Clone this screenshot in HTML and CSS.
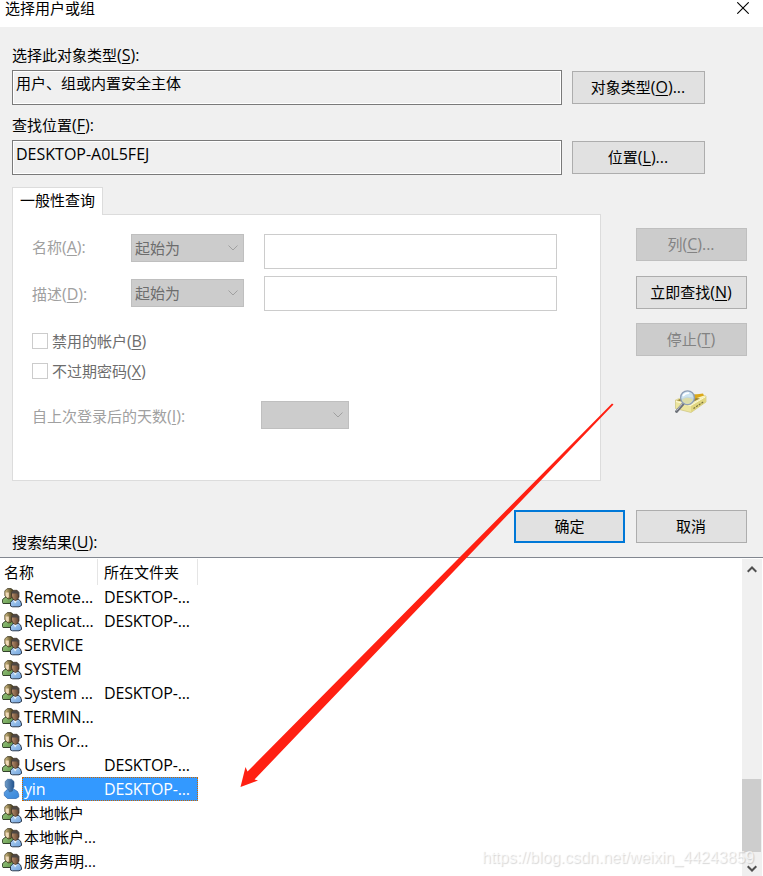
FILE: index.html
```html
<!DOCTYPE html>
<html lang="zh-CN">
<head>
<meta charset="utf-8">
<title>选择用户或组</title>
<link rel="stylesheet" href="styles.css">
</head>
<body>
<svg class="defs" width="0" height="0">
  <defs>
    <linearGradient id="green" x1="0" y1="0" x2="1" y2="1"><stop offset="0" stop-color="#a9cf8e"/><stop offset="1" stop-color="#5c9444"/></linearGradient>
    <linearGradient id="blue" x1="0" y1="0" x2="1" y2="1"><stop offset="0" stop-color="#b5d5f4"/><stop offset="1" stop-color="#6fa2dc"/></linearGradient>
    <linearGradient id="hair" x1="0" y1="0" x2="1" y2="0"><stop offset="0" stop-color="#d3c084"/><stop offset="1" stop-color="#3f3214"/></linearGradient>
    <linearGradient id="face" x1="0" y1="0" x2="1" y2="0"><stop offset="0" stop-color="#b98f6c"/><stop offset="1" stop-color="#5b3f2d"/></linearGradient>
    <linearGradient id="head" x1="0" y1="0" x2="1" y2="0"><stop offset="0" stop-color="#6f9cc8"/><stop offset="1" stop-color="#23548e"/></linearGradient>
    <linearGradient id="body" x1="0" y1="0" x2="1" y2="1"><stop offset="0" stop-color="#5b9ee0"/><stop offset="1" stop-color="#3787dc"/></linearGradient>
  </defs>
  <symbol id="group" viewBox="0 0 20 20">
    <path d="M.4 14.500V12L1.500 10.500 4 9V3.500L6 1H9.500L11.500 3V9L13 11V15.500H1Z" fill="url(#green)" stroke="#26331d" stroke-width=".9"/>
    <path d="M2.800 7.500V3L5 .7H9.300L11.300 3V8L9 10.500 6 11Z" fill="url(#hair)" stroke="#3a3018" stroke-width=".7"/>
    <path d="M3.600 4.500H6.800V9L5.800 10 4 8.500Z" fill="#efd8b8"/>
    <path d="M8.500 18V14.500L10 12.500 12 11H16L18.500 13 19.500 16V17.500L17 18.800H10.500Z" fill="url(#blue)" stroke="#1f2c40" stroke-width=".9"/>
    <path d="M11.500 12 13 15.500 15.500 12Z" fill="#eef5fd"/>
    <path d="M9.500 8V4.500L11.300 2.300H15L17 4.500V9L15.300 11.800 13.300 12.600 11 11.200Z" fill="url(#face)" stroke="#2f2620" stroke-width=".7"/>
    <path d="M9.700 5.500V4.500L11.500 2.500H15L16.900 4.500V8L15 5.500Z" fill="#4c4743"/>
  </symbol>
  <symbol id="user" viewBox="0 0 20 24">
    <path d="M4.300 18.500V15.500L6 13.500 8.500 12H13.500L17.500 14.500 18.700 17.500V20L16 21.500H7.500Z" fill="url(#body)" stroke="#2b69b3" stroke-width=".7"/>
    <path d="M5.200 9V4.500L7.500 2.300H11.500L14 4.500V10L12.500 12.500V14L9.500 15 8.500 12.500 6.500 11Z" fill="url(#head)" stroke="#315f91" stroke-width=".6"/>
  </symbol>
  <symbol id="chev" viewBox="0 0 10 6"><path d="M.5 .5 5 5 9.500 .5" fill="none" stroke="currentColor"/></symbol>
</svg>

<header class="title"><span>选择用户或组</span>
  <svg class="close" viewBox="0 0 12 12"><path d="M.3 .3 11.700 11.700M11.700 .3 .3 11.700" stroke="#000" stroke-width="1.100"/></svg>
</header>

<main class="dialog">
  <div class="label">选择此对象类型<span class="k">(<u>S</u>):</span></div>
  <div class="pick"><div class="field">用户、组或内置安全主体</div><div class="btn">对象类型<span class="k">(<u>O</u>)...</span></div></div>
  <div class="label">查找位置<span class="k">(<u>F</u>):</span></div>
  <div class="pick"><div class="field loc"><span class="k">DESKTOP-A0L5FEJ</span></div><div class="btn">位置<span class="k">(<u>L</u>)...</span></div></div>

  <div class="query">
    <div class="tabs">
      <div class="tab">一般性查询</div>
      <div class="panel">
        <div class="crit first"><span class="dim">名称<span class="k">(<u>A</u>):</span></span><div class="combo">起始为<svg><use href="#chev"/></svg></div><div class="input"></div></div>
        <div class="crit second"><span class="dim">描述<span class="k">(<u>D</u>):</span></span><div class="combo">起始为<svg><use href="#chev"/></svg></div><div class="input"></div></div>
        <div class="check"><i></i><span>禁用的帐户<span class="k b">(<u>B</u>)</span></span></div>
        <div class="check"><i></i><span>不过期密码<span class="k">(<u>X</u>)</span></span></div>
        <div class="days"><span class="dim">自上次登录后的天数<span class="k">(<u>I</u>):</span></span><div class="combo"><svg><use href="#chev"/></svg></div></div>
      </div>
    </div>
    <div class="side">
      <div class="btn off">列<span class="k">(<u>C</u>)...</span></div>
      <div class="btn">立即查找<span class="k">(<u>N</u>)</span></div>
      <div class="btn off third">停止<span class="k">(<u>T</u>)</span></div>
      <svg class="finder" viewBox="0 0 32 24">
        <path d="M.5 10 16 4 31 6V12L16 22.500 .5 18.500Z" fill="#ece59f" stroke="#c8be70" stroke-width=".6"/>
        <path d="M.8 10 14 5 30.500 6 16 15Z" fill="#f8f3bf"/>
        <path d="M1.500 10.300 12 6.500 25 8.500 15 13.500Z" fill="#9a8433"/>
        <path d="M17 5 28 3.500 29 5.500 19 9Z" fill="#dba81a"/>
        <path d="M1 11.500 16 15.500 30.500 6.800" fill="none" stroke="#fffbd9"/>
        <path d="M16 16V22.300L31 12V7Z" fill="#e0d680"/>
        <path d="M18.500 18.500 29 11.500" stroke="#79713a" stroke-width="1.200" stroke-dasharray="2 1.200"/>
        <path d="M1.500 21.500 8 14" stroke="#6d7178" stroke-width="2.800" stroke-linecap="round"/>
        <path d="M1.500 20.500 7.500 13.500" stroke="#c7cbd4" stroke-width="1"/>
        <circle cx="12.500" cy="7.700" r="6.900" fill="#c9e4f8" fill-opacity=".88" stroke="#8e9eb5" stroke-width="1.300"/>
        <path d="M7 10Q12 6 18 9.500Q16 14 12 14 8 13 7 10Z" fill="#dbdca9"/>
        <path d="M8 6Q10 3 14 3" fill="none" stroke="#fff" stroke-width="1.500"/>
      </svg>
    </div>
  </div>
  <div class="foot"><div class="label res">搜索结果<span class="k">(<u>U</u>):</span></div><div class="btn ok">确定</div><div class="btn">取消</div></div>
</main>

<section class="results">
  <div class="list">
    <div class="head"><span>名称</span><span>所在文件夹</span></div>
    <div class="row"><svg><use href="#group"/></svg><span>Remote...</span><span>DESKTOP-...</span></div>
    <div class="row"><svg><use href="#group"/></svg><span>Replicat...</span><span>DESKTOP-...</span></div>
    <div class="row"><svg><use href="#group"/></svg><span>SERVICE</span></div>
    <div class="row"><svg><use href="#group"/></svg><span>SYSTEM</span></div>
    <div class="row"><svg><use href="#group"/></svg><span>System ...</span><span>DESKTOP-...</span></div>
    <div class="row"><svg><use href="#group"/></svg><span>TERMIN...</span></div>
    <div class="row"><svg><use href="#group"/></svg><span>This Or...</span></div>
    <div class="row"><svg><use href="#group"/></svg><span>Users</span><span>DESKTOP-...</span></div>
    <div class="row sel"><svg class="one"><use href="#user"/></svg><div class="hl"><span>yin</span><span>DESKTOP-...</span></div></div>
    <div class="row zh"><svg><use href="#group"/></svg><span>本地帐户</span></div>
    <div class="row zh"><svg><use href="#group"/></svg><span>本地帐户...</span></div>
    <div class="row zh"><svg><use href="#group"/></svg><span>服务声明...</span></div>
  </div>
  <div class="scroll">
    <svg class="arr" viewBox="0 0 10 7"><path d="M.7 5.800 5 1.500 9.300 5.800" fill="none" stroke="#505050" stroke-width="2"/></svg>
    <div class="thumb"></div>
    <svg class="arr" viewBox="0 0 10 7"><path d="M.7 1.200 5 5.500 9.300 1.200" fill="none" stroke="#505050" stroke-width="2"/></svg>
  </div>
</section>

<svg class="arrow" viewBox="0 0 763 876"><path d="M612 403.500 613.500 404.500 254.500 779.500 258 780.500 240.500 787 245.500 767 247.500 771.500Z" fill="#ff2012"/></svg>
<div class="mark">https://blog.csdn.net/weixin_44243859</div>
</body>
</html>
```
FILE: styles.css
```css
* { box-sizing: border-box; }
body {
  margin: 0;
  width: 763px;
  height: 876px;
  overflow: hidden;
  position: relative;
  background: #fff;
  color: #000;
  font: 15px/20px "Open Sans", "Noto Sans CJK SC", sans-serif;
  white-space: nowrap;
}
svg { display: block; flex: none; }
.defs { position: absolute; }
u { text-underline-offset: 2px; text-decoration-thickness: 1px; text-decoration-skip-ink: none; }
.k { font-size: 16px; line-height: 1; }
.k.b { letter-spacing: -.3px; }

.title { height: 27px; display: flex; justify-content: space-between; padding: 0 14px 0 5px; line-height: 17px; }
.close { width: 12px; height: 12px; margin-top: 2px; }

.dialog { height: 531px; background: #f0f0f0; border-bottom: 1px solid #828790; padding: 18px 0 0 12px; }
.label { height: 20px; margin-bottom: 5px; }
.pick { display: flex; gap: 10px; align-items: center; height: 35px; margin-bottom: 10px; }
.field { width: 550px; height: 35px; border: 1px solid #7a7a7a; box-shadow: inset 0 0 0 1px #fff; padding: 2px 3px; }
.field.loc { padding-top: 3px; }
.btn { width: 111px; height: 33px; background: #e1e1e1; border: 1px solid #adadad; text-align: center; line-height: 30px; padding-right: 1px; }
.pick .btn { width: 133px; }
.btn.off { background: #ccc; border-color: #bfbfbf; color: #838383; }
.btn.ok { border: 2px solid #0078d7; line-height: 28px; padding-right: 0; }

.query { display: flex; gap: 35px; margin-top: 12px; }
.tabs { width: 589px; }
.tab { position: relative; width: 91px; height: 28px; margin-bottom: -1px; padding-left: 7px; line-height: 24px; background: #fff; border: 1px solid #dcdcdc; border-bottom: 0; }
.panel { height: 267px; background: #fff; border: 1px solid #dcdcdc; padding: 19px 0 0 19px; }
.crit { display: flex; height: 42px; }
.crit.second { height: 57px; }
.crit .dim { width: 99px; margin-top: 3px; }
.second .dim { margin-top: 8px; }
.dim { color: #a0a0a0; }
.combo { display: flex; justify-content: space-between; align-items: center; width: 113px; height: 28px; padding: 0 5px 0 3px; background: #ccc; border: 1px solid #bfbfbf; color: #6d6d6d; line-height: 26px; }
.combo svg { width: 10px; height: 6px; margin-left: auto; color: #a0a0a0; }
.second .combo { margin-top: 3px; }
.input { width: 293px; height: 35px; margin-left: 20px; border: 1px solid #ccc; }
.check { display: flex; height: 30px; gap: 4px; color: #6d6d6d; }
.check i { width: 16px; height: 16px; border: 1px solid #ccc; }
.check > span { line-height: 16px; }
.days { display: flex; margin-top: 8px; }
.days .dim { width: 229px; margin-top: 5px; }
.days .combo { width: 88px; }
.side { padding-top: 41px; display: flex; flex-direction: column; }
.side .btn { margin-bottom: 15px; }
.side .btn:nth-child(2) { margin-bottom: 14px; }
.side .third { margin-bottom: 34px; }
.finder { width: 32px; height: 24px; margin-left: 39px; }
.foot { display: flex; gap: 11px; margin-top: 29px; }
.foot .label { width: 491px; margin: 22px 0 0; height: 20px; }

.results { height: 318px; display: flex; justify-content: space-between; padding-right: 1px; }
.list { padding-top: 1px; }
.head { display: flex; height: 26px; line-height: 26px; }
.head span { width: 98px; padding-left: 4px; border-right: 1px solid #e5e5e5; }
.head span + span { width: 100px; padding-left: 6px; }
.row { display: flex; align-items: center; height: 24px; line-height: 24px; font-size: 16px; letter-spacing: -.18px; }
.row.zh { font-size: 15px; letter-spacing: 0; }
.row svg { width: 20px; height: 20px; margin: 1px 2px 0; }
.row span { width: 80px; }
.row > span { padding-top: 1px; line-height: 23px; }
.row .one { width: 20px; height: 24px; margin: 0 2px 0 0; }
.hl { display: flex; width: 176px; height: 24px; line-height: 23px; padding-left: 1px; background: #3399ff; color: #fff; border: 1px dotted #cc6600; }
.scroll { width: 20px; margin-top: 1px; background: #f0f0f0; display: flex; flex-direction: column; }
.arr { width: 10px; height: 7px; margin: 7px 0 0 5px; }
.thumb { width: 19px; height: 73px; margin-top: 206px; background: #cdcdcd; }
.thumb + .arr { margin-top: 13px; }

.arrow { position: absolute; inset: 0; width: 763px; height: 876px; }
.mark { position: absolute; left: 482px; top: 848px; font: 16px/20px "Liberation Sans", sans-serif; color: rgba(255,255,255,.65); text-shadow: 1px 1px 1px rgba(0,0,0,.16); }
```
